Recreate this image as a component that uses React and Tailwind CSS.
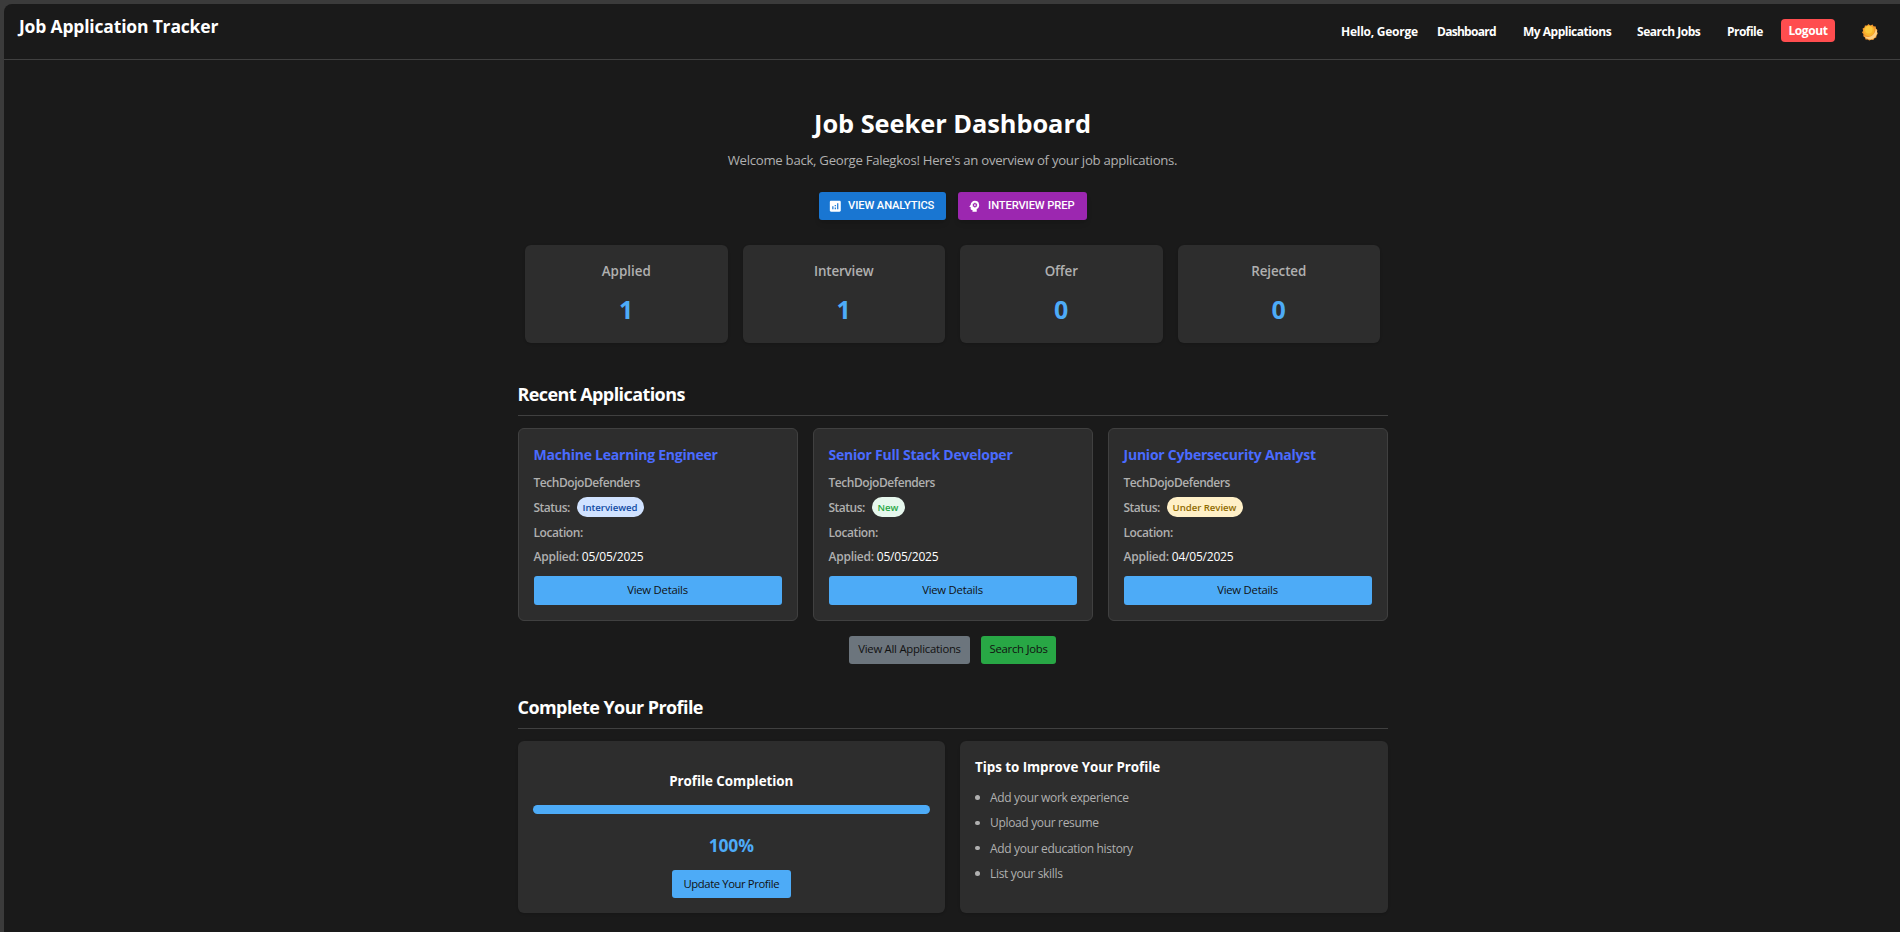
import React from "react";
import { MdAnalytics, MdPsychology } from "react-icons/md";

const stats = [
  { label: "Applied", value: 1, tracking: "tracking-[0px]" },
  { label: "Interview", value: 1, tracking: "tracking-[-0.15px]" },
  { label: "Offer", value: 0, tracking: "tracking-[-0.1px]" },
  { label: "Rejected", value: 0, tracking: "tracking-[-0.1px]" },
];

const applications = [
  {
    title: "Machine Learning Engineer",
    status: "Interviewed",
    badge: "w-[67px] bg-[#d0e2ff] text-[#0f4aa3]",
    date: "05/05/2025",
  },
  {
    title: "Senior Full Stack Developer",
    status: "New",
    badge: "w-[33px] bg-[#e6f7ed] text-[#28a745]",
    date: "05/05/2025",
  },
  {
    title: "Junior Cybersecurity Analyst",
    status: "Under Review",
    badge: "w-[76px] bg-[#fff0c7] text-[#8f6b00]",
    date: "04/05/2025",
  },
];

const tips = [
  "Add your work experience",
  "Upload your resume",
  "Add your education history",
  "List your skills",
];

function ThemeIcon() {
  return (
    <svg viewBox="0 0 16 17" className="h-[17px] w-4">
      <path
        d="M6.5 0 8.200 1.400 10.600.6l.9 1.600 2.300.200.100 2.200 1.500 1.300-.4 1.900.8 2-1.300 1.500-.2 2.200-1.900.8-1.100 1.600-2.100-.1-1.900.8-1.700-1-2.100-.2L3 13.400 1.300 12.200 1.400 10.100 0 8.400 1.100 6.700.6 4.600 2.500 3.600 2.900 1.500 5.100 1.600z"
        fill="#f2982f"
      />
      <path d="M13.700 4.200A6.600 6.600 0 1 1 2.400 12.600 8.500 8.500 0 0 0 13.700 4.200z" fill="#ffd083" />
      <circle cx="7" cy="6.800" r="5.300" fill="#f9b52c" />
      <circle cx="6.800" cy="5.800" r="3.700" fill="#fdc83c" />
    </svg>
  );
}

function Header() {
  return (
    <header className="flex h-14 items-start justify-between border-b border-[#404040] pl-[15px] pr-[22px] pt-[10px]">
      <div className="text-[17.500px] font-bold leading-6 tracking-[-0.18px] text-white">
        Job Application Tracker
      </div>
      <nav className="flex items-center whitespace-nowrap pt-1 text-[12px] font-bold leading-[23px] text-white">
        <span className="w-[96px] pt-0.5 tracking-[-0.25px]">Hello, George</span>
        <a className="w-[86px] pt-0.5 tracking-[-0.72px]">Dashboard</a>
        <a className="w-[114px] pt-0.5 tracking-[-0.5px]">My Applications</a>
        <a className="w-[90px] pt-0.5 tracking-[-0.47px]">Search Jobs</a>
        <a className="w-[54px] pt-0.5 tracking-[-0.53px]">Profile</a>
        <button className="mr-[27px] h-[23px] w-[54px] rounded-[4px] bg-[#ff4d4f] pt-px text-center leading-[22px] tracking-[-0.4px]">
          Logout
        </button>
        <span className="pt-1">
          <ThemeIcon />
        </span>
      </nav>
    </header>
  );
}

function SectionTitle({ className, children }) {
  return (
    <h2 className={`h-[35px] border-b border-[#404040] text-[18px] font-bold leading-[26px] text-white ${className}`}>
      {children}
    </h2>
  );
}

function ApplicationCard({ app }) {
  return (
    <article className="h-[193px] rounded-[6px] border border-[#404040] bg-[#2d2d2d] px-[15px] pt-4 text-[12px] font-semibold leading-[18px] text-[#b0b0b0]">
      <h3 className="mb-[9px] whitespace-nowrap text-[14px] font-bold leading-5 tracking-[-0.23px] text-[#4a6bff]">
        {app.title}
      </h3>
      <p className="mb-[5px] tracking-[-0.45px]">TechDojoDefenders</p>
      <div className="mb-[7px] flex h-5 items-center">
        <span className="w-[43px] pt-px tracking-[-0.5px]">Status:</span>
        <span
          className={`flex h-5 items-center justify-center whitespace-nowrap rounded-[10px] pt-px text-[9.600px] tracking-[-0.03px] ${app.badge}`}
        >
          {app.status}
        </span>
      </div>
      <p className="mb-[6px] tracking-[-0.42px]">Location:</p>
      <p className="mb-[10px] flex gap-[3px]">
        <span className="tracking-[-0.24px]">Applied:</span>
        <span className="font-normal tracking-[-0.22px] text-white">{app.date}</span>
      </p>
      <button className="flex h-[29px] w-full justify-center rounded-[3px] bg-[#4dabf7] text-[11.300px] font-normal leading-[27px] tracking-[-0.24px] text-[#111111]">
        View Details
      </button>
    </article>
  );
}

export default function App() {
  return (
    <div className="h-[932px] overflow-hidden bg-[#3b3b3b] pl-1 pt-1 font-['Open_Sans','Noto_Sans',sans-serif]">
      <div className="h-[928px] rounded-tl-[8px] bg-[#1a1a1a]">
        <Header />
        <main className="ml-[513.500px] w-[870px] pt-[45px]">
          <h1 className="text-center text-[25.400px] font-bold leading-9 tracking-[-0.05px] text-white">
            Job Seeker Dashboard
          </h1>
          <p className="mt-[7px] text-center text-[13.200px] leading-6 tracking-[-0.29px] text-[#b0b0b0]">
            Welcome back, George Falegkos! Here's an overview of your job applications.
          </p>

          <div className="mt-5 flex justify-center gap-3 whitespace-nowrap font-['Roboto',sans-serif] text-[11.200px] font-medium leading-7 text-white">
            <button className="flex h-7 w-[127px] items-center rounded-[3px] bg-[#1976d2] pl-[9px] shadow-md">
              <MdAnalytics className="mr-[6px] size-[14.600px] shrink-0" />
              <span className="tracking-[-0.12px]">VIEW ANALYTICS</span>
            </button>
            <button className="flex h-7 w-[129px] items-center rounded-[3px] bg-[#9c27b0] pl-[9px] shadow-md">
              <MdPsychology className="mr-[7px] size-[14.600px] shrink-0" />
              <span className="tracking-[-0.12px]">INTERVIEW PREP</span>
            </button>
          </div>

          <section className="mt-[25px] grid grid-cols-4 gap-[15px] px-[7.500px]">
            {stats.map((s) => (
              <div
                key={s.label}
                className="h-[98px] rounded-[6px] bg-[#2d2d2d] pt-4 text-center shadow"
              >
                <div className={`text-[13.400px] font-semibold leading-5 text-[#b0b0b0] ${s.tracking}`}>
                  {s.label}
                </div>
                <div className="mt-[13px] text-[25px] font-bold leading-[30px] text-[#4dabf7]">
                  {s.value}
                </div>
              </div>
            ))}
          </section>

          <section className="mt-[38px]">
            <SectionTitle className="tracking-[-0.58px]">Recent Applications</SectionTitle>
            <div className="mt-3 grid grid-cols-3 gap-[15px]">
              {applications.map((a) => (
                <ApplicationCard key={a.title} app={a} />
              ))}
            </div>
            <div className="mt-[15px] flex justify-center gap-[11px] text-[11.300px] leading-[26px] tracking-[-0.25px] text-[#111111]">
              <button className="flex h-7 w-[121px] justify-center rounded-[3px] bg-[#6c757d]">
                View All Applications
              </button>
              <button className="flex h-7 w-[75px] justify-center rounded-[3px] bg-[#28a745]">Search Jobs</button>
            </div>
          </section>

          <section className="mt-[30px]">
            <SectionTitle className="tracking-[-0.56px]">Complete Your Profile</SectionTitle>
            <div className="mt-3 grid grid-cols-2 gap-[15px]">
              <div className="flex h-[172px] flex-col items-center rounded-[6px] bg-[#2d2d2d] px-[15px] pt-[30px] shadow">
                <h3 className="text-[13.400px] font-bold leading-5 tracking-[-0.05px] text-white">
                  Profile Completion
                </h3>
                <div className="mt-[14px] h-[9px] w-full rounded-full bg-[#4dabf7]" />
                <div className="mt-[19px] text-[17.500px] font-bold leading-6 tracking-[-0.2px] text-[#4dabf7]">
                  100%
                </div>
                <button className="mt-[13px] h-7 w-[119px] rounded-[3px] bg-[#4dabf7] text-[11.300px] leading-7 tracking-[-0.4px] text-[#111111]">
                  Update Your Profile
                </button>
              </div>
              <div className="h-[172px] rounded-[6px] bg-[#2d2d2d] px-[15px] pt-4 shadow">
                <h3 className="text-[13.400px] font-bold leading-5 tracking-[-0.05px] text-white">
                  Tips to Improve Your Profile
                </h3>
                <ul className="mt-[8px] text-[12px] leading-[25.300px] tracking-[-0.33px] text-[#b0b0b0]">
                  {tips.map((t) => (
                    <li key={t} className="flex items-center">
                      <span className="mr-[10.500px] size-[4.500px] rounded-full bg-[#b0b0b0]" />
                      {t}
                    </li>
                  ))}
                </ul>
              </div>
            </div>
          </section>
        </main>
      </div>
    </div>
  );
}
